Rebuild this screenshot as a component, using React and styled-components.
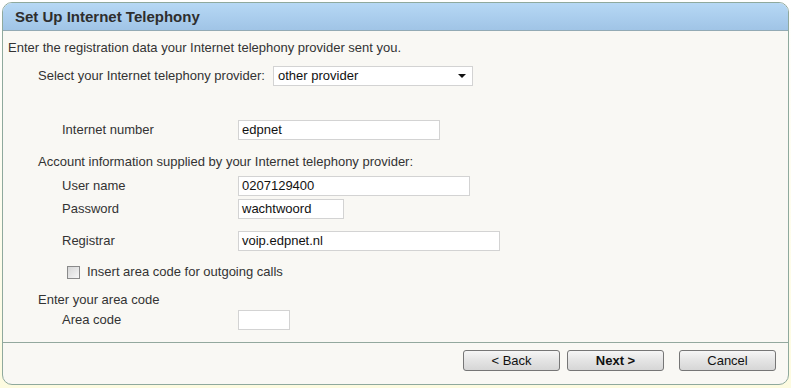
import React from 'react';
import styled, { createGlobalStyle } from 'styled-components';

const Global = createGlobalStyle`
html, body {
  margin: 0;
  padding: 0;
}
body {
  width: 791px;
  height: 388px;
  overflow: hidden;
  background: linear-gradient(#ffffff, #fdfbe0);
  font-family: "Liberation Sans", Arial, sans-serif;
  color: #333;
}
`;

const Panel = styled.div`
margin: 2px;
width: 787px;
height: 383px;
box-sizing: border-box;
border: 1px solid #8fa99d;
border-radius: 10px;
background-color: #f9f8f4;
display: flex;
flex-direction: column;
overflow: hidden;
`;

const Header = styled.div`
height: 27px;
flex-shrink: 0;
display: flex;
align-items: center;
padding-left: 12px;
background-image: linear-gradient(#b6d8f5, #a0c4e6);
border-bottom: 1px solid #93aab4;
font-size: 15px;
font-weight: bold;
color: #2e2e2e;
`;

const Body = styled.div`
flex: 1;
padding: 9px 0 0 5px;
font-size: 13px;
line-height: 16px;
`;

const Intro = styled.div`
margin-bottom: 10px;
`;

const Row = styled.div`
display: flex;
align-items: center;
height: 20px;
margin-top: ${(p) => p.gap || 0}px;
padding-left: ${(p) => (p.sub ? 54 : 30)}px;
`;

const Label = styled.div`
width: ${(p) => p.w || 176}px;
flex-shrink: 0;
`;

const Caption = styled.div`
margin-top: ${(p) => p.gap || 0}px;
padding-left: 30px;
`;

const Field = styled.div`
box-sizing: border-box;
width: ${(p) => p.w}px;
height: 20px;
background: #fff;
border: 1px solid #d3d3d3;
font-size: 13px;
line-height: 18px;
padding-left: 3px;
color: #111;
`;

const Select = styled(Field)`
display: flex;
align-items: center;
justify-content: space-between;
padding: 0 6px 0 4px;
`;

const Arrow = styled.span`
width: 0;
height: 0;
border-left: 4px solid transparent;
border-right: 4px solid transparent;
border-top: 4px solid #111;
`;

const CheckRow = styled.div`
display: flex;
align-items: center;
margin-top: 13px;
padding-left: 59px;
height: 16px;
`;

const Box = styled.span`
width: 11px;
height: 11px;
border: 1px solid #8a8a8a;
background-image: linear-gradient(135deg, #d6d6d6, #f6f6f6);
margin-right: 7px;
`;

const Footer = styled.div`
height: 42px;
flex-shrink: 0;
border-top: 1px solid #93a89e;
display: flex;
justify-content: flex-end;
align-items: flex-start;
padding: 7px 12px 0 0;
box-sizing: border-box;
`;

const Button = styled.button`
width: 97px;
height: 21px;
margin-left: ${(p) => p.gap}px;
border: 1px solid #767676;
border-radius: 3px;
background-image: linear-gradient(#f6f6f6, #e4e4e4 50%, #d6d6d6);
font-family: "Liberation Sans", Arial, sans-serif;
font-size: 13px;
font-weight: ${(p) => (p.primary ? 'bold' : 'normal')};
color: #111;
padding: 0;
`;

function App() {
  return (
    <>
      <Global />
      <Panel>
        <Header>Set Up Internet Telephony</Header>
        <Body>
          <Intro>Enter the registration data your Internet telephony provider sent you.</Intro>
          <Row>
            <Label w={235}>Select your Internet telephony provider:</Label>
            <Select w={200}>
              other provider
              <Arrow />
            </Select>
          </Row>
          <Row sub gap={34}>
            <Label>Internet number</Label>
            <Field w={202}>edpnet</Field>
          </Row>
          <Caption gap={14}>Account information supplied by your Internet telephony provider:</Caption>
          <Row sub gap={6}>
            <Label>User name</Label>
            <Field w={232}>0207129400</Field>
          </Row>
          <Row sub gap={3}>
            <Label>Password</Label>
            <Field w={106}>wachtwoord</Field>
          </Row>
          <Row sub gap={12}>
            <Label>Registrar</Label>
            <Field w={262}>voip.edpnet.nl</Field>
          </Row>
          <CheckRow>
            <Box />
            Insert area code for outgoing calls
          </CheckRow>
          <Caption gap={12}>Enter your area code</Caption>
          <Row sub gap={2}>
            <Label>Area code</Label>
            <Field w={52} />
          </Row>
        </Body>
        <Footer>
          <Button gap={0}>&lt; Back</Button>
          <Button gap={7} primary>Next &gt;</Button>
          <Button gap={15}>Cancel</Button>
        </Footer>
      </Panel>
    </>
  );
}

export default App;
